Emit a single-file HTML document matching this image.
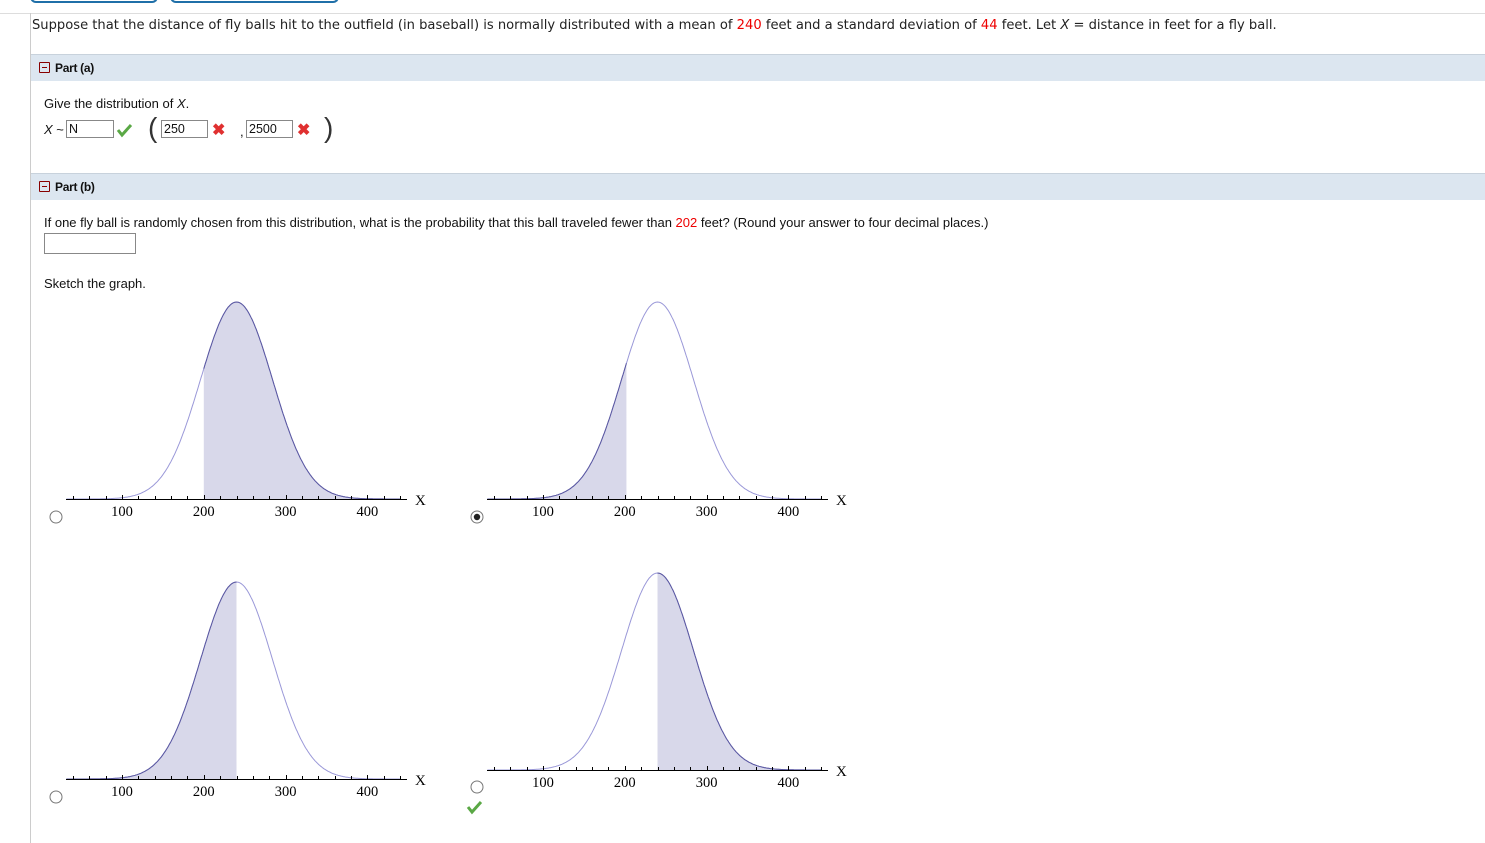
<!DOCTYPE html>
<html><head><meta charset="utf-8"><style>
body{margin:0;width:1485px;height:840px;background:#fff;position:relative;overflow:hidden;font-family:"Liberation Sans",Arial,sans-serif;}
.abs{position:absolute}
.tab{position:absolute;top:-6px;height:7px;border:2px solid #1f6fa8;border-top:none;border-radius:0 0 6px 6px}
.q{position:absolute;left:32px;top:18px;font-family:"DejaVu Sans",Verdana,sans-serif;font-size:13.1px;color:#222;white-space:nowrap}
.red{color:#e00}
.bar{position:absolute;left:31px;right:0;height:26px;background:#dce6f0;border-top:1px solid #c8d2dc;font-size:12px;color:#111}
.bar .m{position:absolute;left:8px;top:7px;width:9px;height:9px;border:1px solid #800;border-radius:1px}
.bar .m:after{content:"";position:absolute;left:2px;top:4px;width:5px;height:1px;background:#800}
.bar span{position:absolute;left:24px;top:6px;font-weight:bold;letter-spacing:-0.3px}
.t{position:absolute;font-size:13px;color:#111;white-space:nowrap}
.inp{position:absolute;border:1px solid #888;height:18px;font-size:12.5px;box-sizing:border-box;padding:1px 2px;color:#111}
.x{position:absolute;color:#e03030;font-size:16px;font-weight:bold}
</style></head><body>
<div class="tab" style="left:30px;width:124px"></div>
<div class="tab" style="left:170px;width:165px"></div>
<div class="abs" style="left:0;right:0;top:13px;height:1px;background:#ddd"></div>
<div class="abs" style="left:30px;top:13px;width:1px;height:830px;background:#ccc"></div>
<div class="q">Suppose that the distance of fly balls hit to the outfield (in baseball) is normally distributed with a mean of <span class="red">240</span> feet and a standard deviation of <span class="red">44</span> feet. Let <i>X</i> = distance in feet for a fly ball.</div>
<div class="bar" style="top:54px"><div class="m"></div><span>Part (a)</span></div>
<div class="t" style="left:44px;top:96px">Give the distribution of <i>X</i>.</div>
<div class="t" style="left:44px;top:122px"><i>X</i> ~</div>
<div class="inp" style="left:66px;top:120px;width:48px">N</div>
<svg class="abs" style="left:116px;top:122px" width="18" height="16"><path d="M2 8 L6 13 L15 3" stroke="#5aa845" stroke-width="3" fill="none"/></svg>
<div class="abs" style="left:148px;top:112px;font-size:28px;font-weight:100;color:#333">(</div>
<div class="inp" style="left:161px;top:120px;width:47px">250</div>
<div class="x" style="left:212px;top:120px">✖</div>
<div class="t" style="left:240px;top:124px">,</div>
<div class="inp" style="left:246px;top:120px;width:47px">2500</div>
<div class="x" style="left:297px;top:120px">✖</div>
<div class="abs" style="left:324px;top:112px;font-size:28px;font-weight:100;color:#333">)</div>
<div class="bar" style="top:173px"><div class="m"></div><span>Part (b)</span></div>
<div class="t" style="left:44px;top:215px">If one fly ball is randomly chosen from this distribution, what is the probability that this ball traveled fewer than <span class="red">202</span> feet? (Round your answer to four decimal places.)</div>
<div class="inp" style="left:44px;top:233px;width:92px;height:21px"></div>
<div class="t" style="left:44px;top:276px">Sketch the graph.</div>
<svg id="g" class="abs" style="left:0;top:0" width="1485" height="840"></svg>
<svg class="abs" style="left:466px;top:799px" width="18" height="16"><path d="M2 8 L6 13 L15 3" stroke="#5aa845" stroke-width="3" fill="none"/></svg>
<script>
var s='';
function graph(ox,ay,py,mode){
 var X=v=>ox+122+(v-100)*0.818, H=ay-py, sg=44;
 var Y=v=>ay-H*Math.exp(-0.5*Math.pow((v-240)/sg,2));
 var lo,hi;
 if(mode=='gt200'){lo=200;hi=440}else if(mode=='lt202'){lo=32;hi=202}else if(mode=='lt240'){lo=32;hi=240}else{lo=240;hi=440}
 var p='M'+X(lo)+' '+ay;
 for(var v=lo;v<=hi;v+=1)p+=' L'+X(v).toFixed(1)+' '+Y(v).toFixed(1);
 p+=' L'+X(hi)+' '+ay+'Z';
 s+='<path d="'+p+'" fill="#d8d8ea"/>';
 var c='';for(var v=32;v<=440;v+=1)c+=(v==32?'M':' L')+X(v).toFixed(1)+' '+Y(v).toFixed(1);
 s+='<path d="'+c+'" stroke="#9a98d8" stroke-width="1" fill="none"/>';
 var d='';for(var v=lo;v<=hi;v+=1)d+=(v==lo?'M':' L')+X(v).toFixed(1)+' '+Y(v).toFixed(1);
 s+='<path d="'+d+'" stroke="#5a58a0" stroke-width="1" fill="none"/>';
 s+='<line x1="'+(ox+66)+'" y1="'+(ay+0.5)+'" x2="'+(ox+407)+'" y2="'+(ay+0.5)+'" stroke="#000"/>';
 for(var v=40;v<=440;v+=20){var x=Math.round(X(v))+0.5;s+='<line x1="'+x+'" y1="'+(ay-(v%100==0?4:3))+'" x2="'+x+'" y2="'+ay+'" stroke="#000"/>';}
 [100,200,300,400].forEach(v=>{s+='<text x="'+X(v)+'" y="'+(ay+17)+'" text-anchor="middle" font-family="Liberation Serif,serif" font-size="14.5">'+v+'</text>'});
 s+='<text x="'+(ox+415)+'" y="'+(ay+6)+'" font-family="Liberation Serif,serif" font-size="15">X</text>';
}
graph(0,499,302,'gt200');graph(421,499,302,'lt202');graph(0,779,582,'lt240');graph(421,770,573,'gt240');
function radio(x,y,on){s+='<circle cx="'+x+'" cy="'+y+'" r="6" fill="#fff" stroke="#777"/>';if(on)s+='<circle cx="'+x+'" cy="'+y+'" r="3.2" fill="#222"/>';}
radio(56,517,0);radio(477,517,1);radio(56,797,0);radio(477,787,0);
document.getElementById('g').innerHTML=s;
</script>
</body></html>
